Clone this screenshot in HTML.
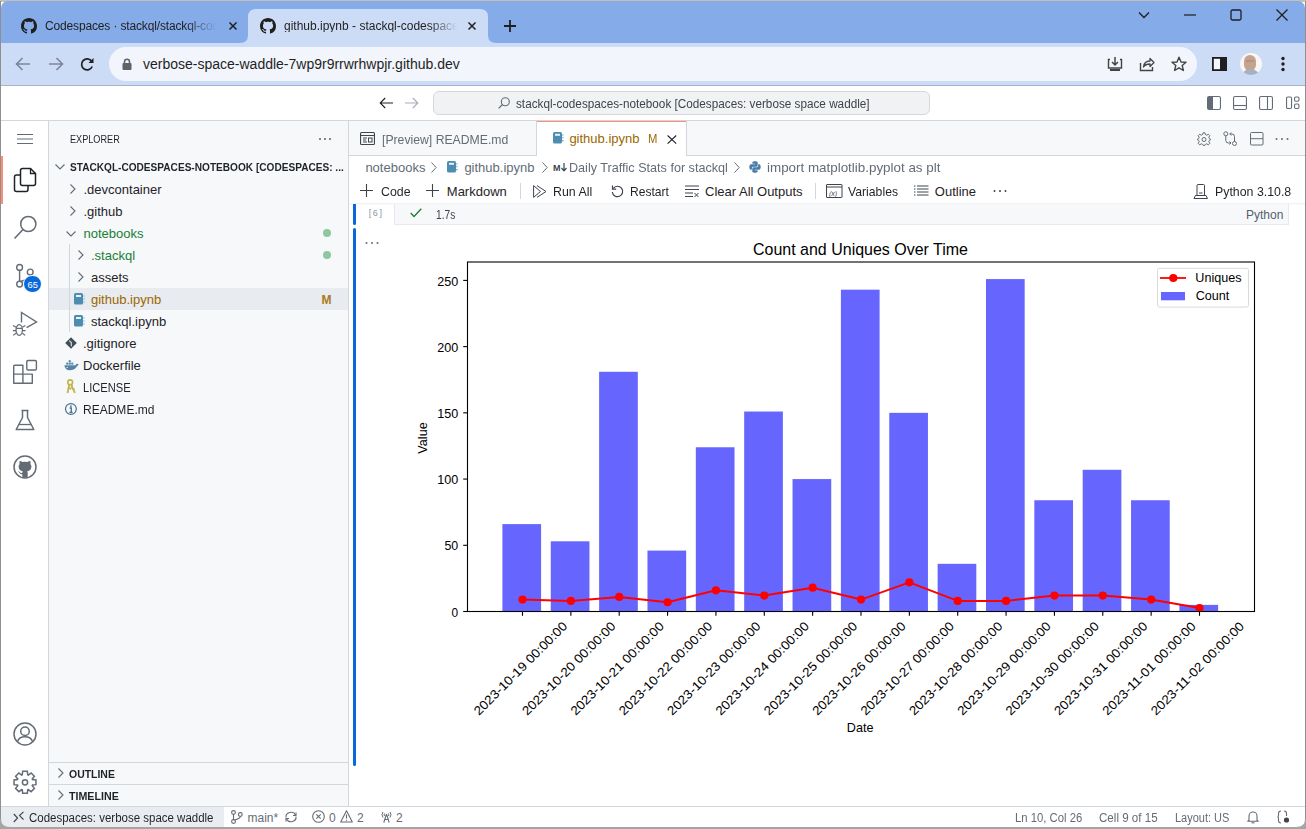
<!DOCTYPE html>
<html><head><meta charset="utf-8">
<style>
*{margin:0;padding:0;box-sizing:border-box}
html,body{width:1306px;height:829px;overflow:hidden;background:#fff;font-family:"Liberation Sans",sans-serif;color:#1f2328}
.a{position:absolute}
.t{position:absolute;white-space:nowrap;line-height:1}
svg{position:absolute;overflow:visible}
text{font-family:"Liberation Sans",sans-serif}
</style></head><body>
<svg width="0" height="0" style="position:absolute"><defs><path id="gh" d="M8 0C3.58 0 0 3.58 0 8c0 3.54 2.29 6.53 5.47 7.59.4.07.55-.17.55-.38 0-.19-.01-.82-.01-1.49-2.01.37-2.53-.49-2.69-.94-.09-.23-.48-.94-.82-1.13-.28-.15-.68-.52-.01-.53.63-.01 1.08.58 1.23.82.72 1.21 1.87.87 2.33.66.07-.52.28-.87.51-1.07-1.78-.2-3.64-.89-3.64-3.95 0-.87.31-1.59.82-2.15-.08-.2-.36-1.02.08-2.12 0 0 .67-.21 2.2.82.64-.18 1.32-.27 2-.27.68 0 1.36.09 2 .27 1.53-1.04 2.2-.82 2.2-.82.44 1.1.16 1.92.08 2.12.51.56.82 1.27.82 2.15 0 3.07-1.87 3.75-3.65 3.95.29.25.54.73.54 1.48 0 1.07-.01 1.93-.01 2.2 0 .21.15.46.55.38A8.013 8.013 0 0016 8c0-4.42-3.58-8-8-8z"/></defs></svg>
<!-- desktop strip -->
<div class="a" style="left:0;top:0;width:1306px;height:2px;background:#c4c0b8"></div>
<!-- chrome tabstrip -->
<div class="a" style="left:1px;top:1px;width:1304px;height:42px;background:#85abe8;border-radius:7px 7px 0 0"></div>
<!-- chrome toolbar -->
<div class="a" style="left:1px;top:43px;width:1304px;height:42px;background:#ccdcf6"></div>
<div class="a" style="left:1px;top:85px;width:1304px;height:1px;background:#a6b4c9"></div>
<!-- active tab shape -->
<svg style="left:0;top:0" width="1306" height="44"><path d="M240,43 Q248,43 248,35 L248,17 Q248,9 256,9 L480,9 Q488,9 488,17 L488,35 Q488,43 496,43 Z" fill="#ccdcf6"/></svg>
<!-- tab 1 -->
<svg style="left:21px;top:18px" width="16" height="16" viewBox="0 0 16 16"><use href="#gh" fill="#1f1f1f"/></svg>
<div class="t" style="left:45px;top:20px;font-size:12px;color:#1f1f1f;width:171px;overflow:hidden;-webkit-mask-image:linear-gradient(to right,#000 82%,transparent 100%);letter-spacing:-0.15px">Codespaces · stackql/stackql-codespaces</div>
<svg style="left:229px;top:22px" width="8" height="8"><path d="M0.5,0.5 L7.5,7.5 M7.5,0.5 L0.5,7.5" stroke="#1f1f1f" stroke-width="1.5"/></svg>
<!-- tab 2 -->
<svg style="left:260px;top:18px" width="16" height="16" viewBox="0 0 16 16"><use href="#gh" fill="#1f1f1f"/></svg>
<div class="t" style="left:284px;top:20px;font-size:12px;color:#1f1f1f;width:173px;overflow:hidden;-webkit-mask-image:linear-gradient(to right,#000 84%,transparent 100%)">github.ipynb - stackql-codespaces-notebook</div>
<svg style="left:468px;top:22px" width="8" height="8"><path d="M0.5,0.5 L7.5,7.5 M7.5,0.5 L0.5,7.5" stroke="#1f1f1f" stroke-width="1.5"/></svg>
<!-- new tab + -->
<svg style="left:503px;top:19px" width="14" height="14"><path d="M7,1 L7,13 M1,7 L13,7" stroke="#1f1f1f" stroke-width="1.8"/></svg>
<!-- window controls -->
<svg style="left:1138px;top:11px" width="12" height="8"><path d="M1,1.5 L6,6.5 L11,1.5" stroke="#1f1f1f" stroke-width="1.3" fill="none"/></svg>
<svg style="left:1184px;top:14px" width="12" height="2"><path d="M0,1 L12,1" stroke="#1f1f1f" stroke-width="1.2"/></svg>
<svg style="left:1230px;top:9px" width="12" height="12"><rect x="1" y="1" width="10" height="10" rx="1.5" stroke="#1f1f1f" stroke-width="1.3" fill="none"/></svg>
<svg style="left:1276px;top:9px" width="12" height="12"><path d="M0.5,0.5 L11.5,11.5 M11.5,0.5 L0.5,11.5" stroke="#1f1f1f" stroke-width="1.3"/></svg>
<!-- toolbar nav -->
<svg style="left:15px;top:57px" width="16" height="14"><path d="M15,7 L1.5,7 M7.5,1 L1.5,7 L7.5,13" stroke="#7c8594" stroke-width="1.6" fill="none"/></svg>
<svg style="left:48px;top:57px" width="16" height="14"><path d="M1,7 L14.5,7 M8.5,1 L14.5,7 L8.5,13" stroke="#7c8594" stroke-width="1.6" fill="none"/></svg>
<svg style="left:80px;top:57px" width="15" height="15"><path d="M12.2,9.5 A5.5,5.5 0 1 1 11.5,4" stroke="#1f1f1f" stroke-width="1.7" fill="none"/><path d="M13.5,1 L13.5,6 L8.5,6 Z" fill="#1f1f1f"/></svg>
<!-- omnibox -->
<div class="a" style="left:109px;top:47px;width:1088px;height:34px;background:#f2f6fc;border-radius:17px"></div>
<svg style="left:122px;top:58px" width="10" height="12"><rect x="0.5" y="5" width="9" height="7" rx="1" fill="#5f6368"/><path d="M2.5,5.5 V3.8 A2.5,2.5 0 0 1 7.5,3.8 V5.5" stroke="#5f6368" stroke-width="1.5" fill="none"/></svg>
<div class="t" style="left:143px;top:57px;font-size:14px;color:#1f1f1f">verbose-space-waddle-7wp9r9rrwrhwpjr.github.dev</div>
<!-- omnibox right icons -->
<svg style="left:1107px;top:56px" width="16" height="16"><path d="M3,3.5 H1.5 V12 H14.5 V3.5 H13" stroke="#444" stroke-width="1.4" fill="none"/><path d="M8,1 V9 M5,6 L8,9 L11,6" stroke="#444" stroke-width="1.5" fill="none"/><rect x="3" y="13" width="10" height="2" fill="#444"/></svg>
<svg style="left:1139px;top:56px" width="16" height="16"><path d="M1.5,7 V14.5 H13.5 V11" stroke="#444" stroke-width="1.4" fill="none"/><path d="M4.5,11 C5,6.5 8,5 11,5 V2.5 L15,6.5 L11,10.5 V8 C8.5,8 6,8.5 4.5,11 Z" stroke="#444" stroke-width="1.3" fill="none" stroke-linejoin="round"/></svg>
<svg style="left:1171px;top:56px" width="16" height="16"><path d="M8,1.2 L10,6 L15,6.3 L11.2,9.5 L12.4,14.5 L8,11.8 L3.6,14.5 L4.8,9.5 L1,6.3 L6,6 Z" stroke="#444" stroke-width="1.4" fill="none" stroke-linejoin="round"/></svg>
<!-- sidebar icon -->
<svg style="left:1212px;top:57px" width="15" height="14"><rect x="0.9" y="0.9" width="13.2" height="12.2" stroke="#1f1f1f" stroke-width="1.8" fill="#f4f6f9"/><rect x="8" y="1" width="6" height="12" fill="#1f1f1f"/></svg>
<!-- avatar -->
<div class="a" style="left:1240px;top:53px;width:22px;height:22px;border-radius:11px;background:#f8f7f5;overflow:hidden">
  <div class="a" style="left:4px;top:1.5px;width:12px;height:16px;border-radius:6px 6px 6px 6px;background:#c6a38c"></div>
  <div class="a" style="left:6px;top:7px;width:8px;height:2px;background:#a88a78;opacity:.6"></div>
  <div class="a" style="left:1px;top:15.5px;width:19px;height:10px;border-radius:9px 9px 0 0;background:#a4b0c4"></div>
</div>
<!-- menu dots -->
<svg style="left:1280px;top:56px" width="6" height="16"><circle cx="3" cy="2.5" r="1.7" fill="#1f1f1f"/><circle cx="3" cy="8" r="1.7" fill="#1f1f1f"/><circle cx="3" cy="13.5" r="1.7" fill="#1f1f1f"/></svg>
<!-- left/right window borders -->
<div class="a" style="left:0;top:1px;width:1px;height:828px;background:#8f8f8f"></div>
<div class="a" style="left:1305px;top:1px;width:1px;height:828px;background:#8f8f8f"></div>
<!-- VS Code title bar -->
<div class="a" style="left:1px;top:86px;width:1304px;height:34px;background:#fff"></div>
<div class="a" style="left:1px;top:120px;width:1304px;height:1px;background:#d0d7de"></div>
<svg style="left:379px;top:97px" width="14" height="12"><path d="M14,6 L1.2,6 M6.2,1 L1.2,6 L6.2,11" stroke="#1f2328" stroke-width="1.1" fill="none"/></svg>
<svg style="left:405px;top:97px" width="14" height="12"><path d="M0,6 L12.8,6 M7.8,1 L12.8,6 L7.8,11" stroke="#a8aeb5" stroke-width="1.1" fill="none"/></svg>
<div class="a" style="left:433px;top:91px;width:497px;height:24px;background:#f1f2f3;border:1px solid #d4d7db;border-radius:6px"></div>
<svg style="left:498px;top:97px" width="12" height="12"><circle cx="7.3" cy="4.7" r="4" stroke="#636c76" stroke-width="1.1" fill="none"/><path d="M4.5,7.5 L0.6,11.4" stroke="#636c76" stroke-width="1.2"/></svg>
<div class="t" style="left:516px;top:97.5px;font-size:12px;color:#3d444d;transform:scaleX(0.978);transform-origin:left">stackql-codespaces-notebook [Codespaces: verbose space waddle]</div>
<!-- layout icons -->
<svg style="left:1207px;top:96px" width="14" height="14"><rect x="0.55" y="0.55" width="12.9" height="12.9" rx="1.5" stroke="#636c76" stroke-width="1.1" fill="none"/><path d="M1,1 H6 V13 H1 Z" fill="#636c76"/></svg>
<svg style="left:1233px;top:96px" width="14" height="14"><rect x="0.55" y="0.55" width="12.9" height="12.9" rx="1.5" stroke="#636c76" stroke-width="1.1" fill="none"/><path d="M1,9.5 H13" stroke="#636c76" stroke-width="1.1"/></svg>
<svg style="left:1259px;top:96px" width="14" height="14"><rect x="0.55" y="0.55" width="12.9" height="12.9" rx="1.5" stroke="#636c76" stroke-width="1.1" fill="none"/><path d="M8.5,1 V13" stroke="#636c76" stroke-width="1.1"/></svg>
<svg style="left:1286px;top:96px" width="14" height="14"><rect x="0.55" y="1.05" width="5" height="11.5" rx="1.2" stroke="#636c76" stroke-width="1.1" fill="none"/><rect x="8.55" y="1.05" width="4.4" height="4.2" rx="1.2" stroke="#636c76" stroke-width="1.1" fill="none"/><rect x="8.55" y="8.05" width="4.4" height="4.4" rx="1.2" stroke="#636c76" stroke-width="1.1" fill="none"/></svg>

<!-- activity bar -->
<div class="a" style="left:1px;top:121px;width:47px;height:686px;background:#fff"></div>
<div class="a" style="left:48px;top:121px;width:1px;height:686px;background:#d0d7de"></div>
<svg style="left:17px;top:133px" width="16" height="12"><path d="M0,1.5 H16 M0,6 H16 M0,10.5 H16" stroke="#636c76" stroke-width="1.1"/></svg>
<div class="a" style="left:1px;top:156px;width:2px;height:48px;background:#fd8c73"></div>
<!-- explorer icon -->
<svg style="left:13px;top:167px" width="24" height="26"><path d="M7.5,8 H3.5 Q1.5,8 1.5,10 V22.5 Q1.5,24.5 3.5,24.5 H13 Q15,24.5 15,22.5 V18.5" stroke="#1f2328" stroke-width="1.5" fill="none"/><path d="M9.5,1.5 H17.5 L22.5,6.5 V16.5 Q22.5,18.5 20.5,18.5 H9.5 Q7.5,18.5 7.5,16.5 V3.5 Q7.5,1.5 9.5,1.5 Z" stroke="#1f2328" stroke-width="1.5" fill="none" stroke-linejoin="round"/><path d="M17.5,1.5 V6.5 H22.5" stroke="#1f2328" stroke-width="1.3" fill="none"/></svg>
<!-- search -->
<svg style="left:13px;top:215px" width="24" height="26"><circle cx="15.3" cy="9" r="7.6" stroke="#636c76" stroke-width="1.5" fill="none"/><path d="M10,14.5 L1.5,23.5" stroke="#636c76" stroke-width="1.6"/></svg>
<!-- scm -->
<svg style="left:13px;top:262px" width="26" height="26"><circle cx="6.6" cy="5.4" r="2.9" stroke="#636c76" stroke-width="1.4" fill="none"/><circle cx="17.2" cy="10" r="2.9" stroke="#636c76" stroke-width="1.4" fill="none"/><circle cx="6.6" cy="22.1" r="2.9" stroke="#636c76" stroke-width="1.4" fill="none"/><path d="M6.6,8.3 V19.2 M17.2,12.9 Q17,17.5 7.5,19.5" stroke="#636c76" stroke-width="1.4" fill="none"/></svg>
<div class="a" style="left:22.5px;top:275.3px;width:19px;height:18px;border-radius:9.5px;background:#0969da;border:1px solid #fff"></div>
<div class="t" style="left:27.6px;top:280.5px;font-size:9.3px;color:#fff">65</div>
<!-- run & debug -->
<svg style="left:12px;top:311px" width="26" height="26"><path d="M9.5,11.5 V1.5 L24.5,11 L14.6,16.6" stroke="#636c76" stroke-width="1.4" fill="none" stroke-linejoin="miter"/><ellipse cx="7.2" cy="19" rx="3.2" ry="5.3" stroke="#636c76" stroke-width="1.3" fill="none"/><path d="M4.2,17.3 H10.2 M1,14.6 L4,16.3 M13.4,14.6 L10.4,16.3 M0.8,19.6 H4 M10.4,19.6 H13.6 M1.2,24.4 L4,22.2 M13.2,24.4 L10.4,22.2" stroke="#636c76" stroke-width="1.2"/></svg>
<!-- extensions -->
<svg style="left:13px;top:359px" width="25" height="25"><path d="M0.7,7.2 Q0.7,6.2 1.7,6.2 H9.9 V15.1 H19.3 V24.2 H0.7 Z M0.7,15.1 H9.9 V24.2" stroke="#636c76" stroke-width="1.4" fill="none" stroke-linejoin="round"/><rect x="13.8" y="1.5" width="9.6" height="9.5" rx="1.2" stroke="#636c76" stroke-width="1.4" fill="none"/></svg>
<!-- testing -->
<svg style="left:15px;top:409px" width="20" height="22"><path d="M6.5,1.5 H13.5 M7.5,1.5 V8.5 L1.2,20.5 H18.8 L12.5,8.5 V1.5" stroke="#636c76" stroke-width="1.5" fill="none" stroke-linejoin="round"/><path d="M4,15.5 H16" stroke="#636c76" stroke-width="1.3"/></svg>
<!-- github -->
<svg style="left:13px;top:455px" width="24" height="24"><circle cx="12" cy="12" r="11" stroke="#636c76" stroke-width="1.5" fill="none"/><path d="M9.3,22.8 V19.3 Q6.8,19.5 5.8,17 Q5.5,16.3 4.8,16 Q5.8,16 6.5,17 Q7.5,18.3 9.3,18 V17.5 Q9.3,16.8 9.8,16.2 Q5.6,15.6 5.6,11.4 Q5.6,10 6.6,8.9 Q6.2,7.7 6.7,6.1 Q8.2,6.1 9.6,7.1 Q12,6.4 14.4,7.1 Q15.8,6.1 17.3,6.1 Q17.8,7.7 17.4,8.9 Q18.4,10 18.4,11.4 Q18.4,15.6 14.2,16.2 Q14.7,16.8 14.7,17.8 V22.8 Z" fill="#636c76"/></svg>
<!-- accounts -->
<svg style="left:13px;top:722px" width="24" height="24"><circle cx="12" cy="12" r="11" stroke="#636c76" stroke-width="1.5" fill="none"/><circle cx="12" cy="9.3" r="4.3" stroke="#636c76" stroke-width="1.5" fill="none"/><path d="M4.5,19.5 Q6,14.7 12,14.7 Q18,14.7 19.5,19.5" stroke="#636c76" stroke-width="1.5" fill="none"/></svg>
<!-- settings gear -->
<svg style="left:13px;top:770px" width="24" height="24" viewBox="0 0 24 24"><path d="M9.26,4.78 L9.67,1.34 L14.33,1.34 L14.74,4.78 L15.38,5.05 L18.10,2.91 L21.39,6.20 L19.25,8.92 L19.52,9.56 L22.96,9.97 L22.96,14.63 L19.52,15.04 L19.25,15.68 L21.39,18.40 L18.10,21.69 L15.38,19.55 L14.74,19.82 L14.33,23.26 L9.67,23.26 L9.26,19.82 L8.62,19.55 L5.90,21.69 L2.61,18.40 L4.75,15.68 L4.48,15.04 L1.04,14.63 L1.04,9.97 L4.48,9.56 L4.75,8.92 L2.61,6.20 L5.90,2.91 L8.62,5.05 Z" stroke="#636c76" stroke-width="1.5" fill="none" stroke-linejoin="miter"/><circle cx="12" cy="12.3" r="2.6" stroke="#636c76" stroke-width="1.5" fill="none"/></svg>

<!-- sidebar -->
<div class="a" style="left:49px;top:121px;width:299px;height:686px;background:#f6f8fa"></div>
<div class="a" style="left:348px;top:121px;width:1px;height:686px;background:#d0d7de"></div>
<div class="t" style="left:69.5px;top:134px;font-size:11px;color:#1f2328;transform:scaleX(0.83);transform-origin:left">EXPLORER</div>
<svg style="left:318px;top:137px" width="14" height="4"><circle cx="2" cy="2" r="1.1" fill="#636c76"/><circle cx="7" cy="2" r="1.1" fill="#636c76"/><circle cx="12" cy="2" r="1.1" fill="#636c76"/></svg>
<svg style="left:55px;top:164px" width="10" height="6"><path d="M0.5,0.5 L5,5 L9.5,0.5" stroke="#636c76" stroke-width="1.1" fill="none"/></svg>
<div class="t" style="left:69.5px;top:162px;font-size:11px;font-weight:bold;color:#1f2328;transform:scaleX(0.918);transform-origin:left">STACKQL-CODESPACES-NOTEBOOK [CODESPACES: ...</div>
<!-- rows -->
<svg style="left:70px;top:184px" width="6" height="10"><path d="M0.5,0.5 L5,5 L0.5,9.5" stroke="#636c76" stroke-width="1.1" fill="none"/></svg>
<div class="t" style="left:83.5px;top:183px;font-size:13px">.devcontainer</div>
<svg style="left:70px;top:206px" width="6" height="10"><path d="M0.5,0.5 L5,5 L0.5,9.5" stroke="#636c76" stroke-width="1.1" fill="none"/></svg>
<div class="t" style="left:83.5px;top:205px;font-size:13px">.github</div>
<svg style="left:66px;top:231px" width="10" height="6"><path d="M0.5,0.5 L5,5 L9.5,0.5" stroke="#636c76" stroke-width="1.1" fill="none"/></svg>
<div class="t" style="left:83.5px;top:227px;font-size:13px;color:#1a7f37">notebooks</div>
<div class="a" style="left:323px;top:229px;width:8px;height:8px;border-radius:4px;background:#8fc7a0"></div>
<div class="a" style="left:69px;top:244px;width:1px;height:88px;background:#d0d7de"></div>
<svg style="left:78px;top:250px" width="6" height="10"><path d="M0.5,0.5 L5,5 L0.5,9.5" stroke="#636c76" stroke-width="1.1" fill="none"/></svg>
<div class="t" style="left:91px;top:249px;font-size:13px;color:#1a7f37">.stackql</div>
<div class="a" style="left:323px;top:251px;width:8px;height:8px;border-radius:4px;background:#8fc7a0"></div>
<svg style="left:78px;top:272px" width="6" height="10"><path d="M0.5,0.5 L5,5 L0.5,9.5" stroke="#636c76" stroke-width="1.1" fill="none"/></svg>
<div class="t" style="left:91px;top:271px;font-size:13px">assets</div>
<div class="a" style="left:49px;top:288px;width:299px;height:22px;background:#e8ebef"></div>
<div class="a" style="left:69px;top:288px;width:1px;height:22px;background:#d0d7de"></div>
<svg style="left:74px;top:293.3px" width="11" height="12"><rect x="0" y="0" width="9" height="11.5" rx="1.5" fill="#4d8eb0"/><rect x="2" y="2" width="5" height="2" fill="#e8f1f6"/><path d="M9.5,3 H10.5 M9.5,6 H10.5 M9.5,9 H10.5" stroke="#4d8eb0" stroke-width="1.2"/></svg>
<div class="t" style="left:91px;top:293px;font-size:13px;color:#9a6700">github.ipynb</div>
<div class="t" style="left:321.5px;top:294px;font-size:12px;font-weight:bold;color:#a97b1e">M</div>
<svg style="left:74px;top:315.3px" width="11" height="12"><rect x="0" y="0" width="9" height="11.5" rx="1.5" fill="#4d8eb0"/><rect x="2" y="2" width="5" height="2" fill="#e8f1f6"/><path d="M9.5,3 H10.5 M9.5,6 H10.5 M9.5,9 H10.5" stroke="#4d8eb0" stroke-width="1.2"/></svg>
<div class="t" style="left:91px;top:315px;font-size:13px">stackql.ipynb</div>
<!-- gitignore -->
<svg style="left:65px;top:337px" width="12" height="12"><path d="M6,0.2 L11.8,6 L6,11.8 L0.2,6 Z" fill="#3f4f58"/><path d="M4.3,3.6 L6.3,5.6 V9.2" stroke="#dfe6ea" stroke-width="1.1" fill="none"/></svg>
<div class="t" style="left:83px;top:337px;font-size:13px">.gitignore</div>
<!-- docker -->
<svg style="left:64px;top:360px" width="15" height="11"><path d="M0.3,5.2 H11.5 Q12.3,3.6 13.8,3.9 Q14.6,4.2 14.7,4.9 Q13.8,5.2 13,6.2 Q11,10.2 5.5,10.2 Q1.2,10.2 0.3,5.2 Z" fill="#5486a8"/><rect x="2.2" y="2.6" width="2.1" height="2" fill="#5486a8"/><rect x="4.7" y="2.6" width="2.1" height="2" fill="#5486a8"/><rect x="7.2" y="2.6" width="2.1" height="2" fill="#5486a8"/><rect x="4.7" y="0.2" width="2.1" height="2" fill="#5486a8"/><circle cx="3.2" cy="7.4" r="0.6" fill="#f6f8fa"/></svg>
<div class="t" style="left:83px;top:359px;font-size:13px">Dockerfile</div>
<!-- license -->
<svg style="left:66px;top:379px" width="10" height="15"><circle cx="4.2" cy="3.3" r="2.4" stroke="#c1b54a" stroke-width="1.6" fill="none"/><path d="M3.2,5.5 L1.6,14 M5.6,5.5 L6.4,9 M3.5,9.5 H5.3 M5.5,7 L9,13.8 M7,10.5 L8.6,9.8" stroke="#c1b54a" stroke-width="1.8" fill="none"/></svg>
<div class="t" style="left:83px;top:381px;font-size:13px;transform:scaleX(0.855);transform-origin:left">LICENSE</div>
<!-- readme info -->
<svg style="left:65px;top:403px" width="12" height="12"><circle cx="5.9" cy="6" r="5.4" stroke="#4b6e8e" stroke-width="1.2" fill="none"/><path d="M4.6,5 H6.3 V9.3 M4.4,9.3 H7.6" stroke="#4b6e8e" stroke-width="1.3" fill="none"/><circle cx="5.9" cy="3.1" r="0.9" fill="#4b6e8e"/></svg>
<div class="t" style="left:83px;top:403px;font-size:13px;transform:scaleX(0.924);transform-origin:left">README.md</div>
<!-- outline / timeline -->
<div class="a" style="left:49px;top:762px;width:299px;height:1px;background:#d0d7de"></div>
<svg style="left:58px;top:768px" width="6" height="10"><path d="M0.5,0.5 L5,5 L0.5,9.5" stroke="#636c76" stroke-width="1.1" fill="none"/></svg>
<div class="t" style="left:69px;top:768.5px;font-size:11px;font-weight:bold;transform:scaleX(0.95);transform-origin:left">OUTLINE</div>
<div class="a" style="left:49px;top:784px;width:299px;height:1px;background:#d0d7de"></div>
<svg style="left:58px;top:790px" width="6" height="10"><path d="M0.5,0.5 L5,5 L0.5,9.5" stroke="#636c76" stroke-width="1.1" fill="none"/></svg>
<div class="t" style="left:69px;top:790.5px;font-size:11px;font-weight:bold;transform:scaleX(0.97);transform-origin:left">TIMELINE</div>

<!-- status bar -->
<div class="a" style="left:1px;top:806px;width:1304px;height:1px;background:#d0d7de"></div>
<div class="a" style="left:1px;top:807px;width:1304px;height:20px;background:#fff"></div>
<div class="a" style="left:1px;top:807px;width:223px;height:20px;background:#e9ecf0"></div>
<svg style="left:13px;top:811px" width="11" height="12"><path d="M0.8,11 L4.6,7 L0.8,3 M10.5,0.8 L6.5,4.6 L10.5,8.5" stroke="#3d444d" stroke-width="1.1" fill="none"/></svg>
<div class="t" style="left:28.8px;top:811.8px;font-size:12px;color:#1f2328;transform:scaleX(0.957);transform-origin:left">Codespaces: verbose space waddle</div>
<svg style="left:231px;top:810px" width="12" height="14"><circle cx="2.5" cy="2.5" r="1.9" stroke="#636c76" stroke-width="1.1" fill="none"/><circle cx="9.3" cy="4.5" r="1.9" stroke="#636c76" stroke-width="1.1" fill="none"/><circle cx="2.5" cy="11.5" r="1.9" stroke="#636c76" stroke-width="1.1" fill="none"/><path d="M2.5,4.4 V9.6 M9.3,6.4 Q9.3,8.5 3.5,10" stroke="#636c76" stroke-width="1.1" fill="none"/></svg>
<div class="t" style="left:247.5px;top:811.8px;font-size:12px;color:#636c76">main*</div>
<svg style="left:284px;top:811px" width="14" height="12"><path d="M2,6.5 A5,4.7 0 0 1 11.5,4 M12,5.5 A5,4.7 0 0 1 2.5,8" stroke="#636c76" stroke-width="1.1" fill="none"/><path d="M12,1.5 V4.5 H9 M2,10.5 V7.5 H5" stroke="#636c76" stroke-width="1.1" fill="none"/></svg>
<svg style="left:312px;top:810px" width="13" height="13"><circle cx="6.5" cy="6.5" r="5.8" stroke="#636c76" stroke-width="1.1" fill="none"/><path d="M4.3,4.3 L8.7,8.7 M8.7,4.3 L4.3,8.7" stroke="#636c76" stroke-width="1.1"/></svg>
<div class="t" style="left:329px;top:811.8px;font-size:12px;color:#636c76">0</div>
<svg style="left:339.5px;top:810px" width="13" height="13"><path d="M6.5,0.8 L12.3,12 H0.7 Z" stroke="#636c76" stroke-width="1.1" fill="none" stroke-linejoin="round"/><path d="M6.5,4.5 V8.5 M6.5,9.8 V10.8" stroke="#636c76" stroke-width="1.1"/></svg>
<div class="t" style="left:357px;top:811.8px;font-size:12px;color:#636c76">2</div>
<svg style="left:380px;top:810px" width="13" height="13"><path d="M3,2 Q1,4.5 3,7.5 M10,2 Q12,4.5 10,7.5 M4.5,3.5 Q3.8,4.7 4.5,6 M8.5,3.5 Q9.2,4.7 8.5,6" stroke="#636c76" stroke-width="1" fill="none"/><path d="M6.5,4 L3.8,12.5 M6.5,4 L9.2,12.5 M4.8,9.5 H8.2" stroke="#636c76" stroke-width="1.1" fill="none"/></svg>
<div class="t" style="left:396px;top:811.8px;font-size:12px;color:#636c76">2</div>
<div class="t" style="left:1015px;top:811.8px;font-size:12px;color:#636c76;transform:scaleX(0.943);transform-origin:left">Ln 10, Col 26</div>
<div class="t" style="left:1099px;top:811.8px;font-size:12px;color:#636c76;transform:scaleX(0.965);transform-origin:left">Cell 9 of 15</div>
<div class="t" style="left:1174.6px;top:811.8px;font-size:12px;color:#636c76;transform:scaleX(0.916);transform-origin:left">Layout: US</div>
<svg style="left:1247px;top:810px" width="12" height="14"><path d="M2,10 V6 A4,4 0 0 1 10,6 V10 L11.3,11.3 H0.7 Z" stroke="#636c76" stroke-width="1.1" fill="none" stroke-linejoin="round"/><path d="M4.5,12.8 H7.5" stroke="#636c76" stroke-width="1.1"/></svg>
<svg style="left:1277px;top:810px" width="13" height="14"><path d="M4,1 Q1.5,1 1.5,3.5 V5.5 Q1.5,7 0.5,7 Q1.5,7 1.5,8.5 V10.5 Q1.5,13 4,13" stroke="#636c76" stroke-width="1.1" fill="none"/><path d="M7,1 Q9.5,1 9.5,3.5 V6" stroke="#636c76" stroke-width="1.1" fill="none"/><circle cx="9.5" cy="10" r="2.6" fill="#3d444d"/></svg>
<!-- window bottom -->
<div class="a" style="left:0;top:827px;width:1306px;height:2px;background:#a5a5a5"></div>
<svg style="left:0;top:819px" width="1306" height="10"><path d="M0,0 V10 H10 V8 Q1,8 1,0 Z M1306,0 V10 H1296 V8 Q1305,8 1305,0 Z" fill="#a5a5a5"/></svg>
<!-- editor bg -->
<div class="a" style="left:349px;top:156px;width:956px;height:649px;background:#fff"></div>
<!-- tabs bar -->
<div class="a" style="left:349px;top:121px;width:956px;height:35px;background:#f6f8fa"></div>
<div class="a" style="left:349px;top:155px;width:956px;height:1px;background:#d0d7de"></div>
<div class="a" style="left:536px;top:121px;width:1px;height:35px;background:#d0d7de"></div>
<div class="a" style="left:537px;top:121px;width:149px;height:35px;background:#fff"></div>
<div class="a" style="left:537px;top:121px;width:149px;height:1px;background:#fd8c73"></div>
<div class="a" style="left:686px;top:121px;width:1px;height:35px;background:#d0d7de"></div>
<!-- preview icon -->
<svg style="left:360px;top:132px" width="15" height="13"><rect x="0.55" y="0.55" width="13.9" height="11.9" rx="1" stroke="#3d444d" stroke-width="1.1" fill="none"/><path d="M1,3.5 H14 M3,6 H7 M3,8 H6 M3,10 H7" stroke="#3d444d" stroke-width="1"/><rect x="8.5" y="6" width="3.5" height="4" stroke="#3d444d" stroke-width="1" fill="none"/></svg>
<div class="t" style="left:382px;top:132.7px;font-size:13px;color:#636c76;transform:scaleX(0.94);transform-origin:left">[Preview] README.md</div>
<svg style="left:552.5px;top:132px" width="11" height="12"><rect x="0" y="0" width="9" height="11.5" rx="1.5" fill="#4d8eb0"/><rect x="2" y="1.8" width="5" height="2" fill="#e8f1f6"/><path d="M9.3,3 H10.5 M9.3,5.8 H10.5 M9.3,8.6 H10.5" stroke="#4d8eb0" stroke-width="1.1"/></svg>
<div class="t" style="left:569.4px;top:132.3px;font-size:13px;color:#9a6700">github.ipynb</div>
<div class="t" style="left:647.5px;top:132.8px;font-size:12.5px;color:#9a6700;transform:scaleX(0.9);transform-origin:left">M</div>
<svg style="left:667px;top:134.5px" width="10" height="9"><path d="M0.6,0.5 L9.2,8.7 M9.2,0.5 L0.6,8.7" stroke="#1f2328" stroke-width="1.1"/></svg>
<!-- editor actions -->
<svg style="left:1197px;top:132px" width="14" height="14"><path d="M6,0.8 H8 L8.4,2.6 L9.7,3.2 L11.3,2.2 L12.8,3.7 L11.8,5.3 L12.3,6.5 L13.3,6.9 V8.1 L12.3,8.5 L11.8,9.7 L12.8,11.3 L11.3,12.8 L9.7,11.8 L8.4,12.4 L8,13.3 H6 L5.6,12.4 L4.3,11.8 L2.7,12.8 L1.2,11.3 L2.2,9.7 L1.7,8.5 L0.7,8.1 V6.9 L1.7,6.5 L2.2,5.3 L1.2,3.7 L2.7,2.2 L4.3,3.2 L5.6,2.6 Z" stroke="#636c76" stroke-width="1" fill="none" stroke-linejoin="round"/><circle cx="7" cy="7.5" r="2" stroke="#636c76" stroke-width="1" fill="none"/></svg>
<svg style="left:1223px;top:131px" width="15" height="16"><circle cx="2.8" cy="2.8" r="2" stroke="#636c76" stroke-width="1" fill="none"/><circle cx="11.5" cy="12.5" r="2" stroke="#636c76" stroke-width="1" fill="none"/><path d="M2.8,4.8 V9.5 Q2.8,12 5.5,12 H8 M6.5,10.5 L8,12 L6.5,13.5 M11.5,10.5 V5.5 Q11.5,3 9,3 H7 M8.2,1.5 L6.7,3 L8.2,4.5" stroke="#636c76" stroke-width="1" fill="none"/></svg>
<svg style="left:1250px;top:132px" width="14" height="14"><rect x="0.5" y="0.5" width="12.5" height="12.5" rx="1" stroke="#636c76" stroke-width="1" fill="none"/><path d="M0.5,6.7 H13" stroke="#636c76" stroke-width="1"/></svg>
<svg style="left:1275px;top:137px" width="14" height="4"><circle cx="1.5" cy="2" r="1" fill="#636c76"/><circle cx="7" cy="2" r="1" fill="#636c76"/><circle cx="12.5" cy="2" r="1" fill="#636c76"/></svg>

<!-- breadcrumbs -->
<div class="t" style="left:365.4px;top:161.2px;font-size:13px;color:#636c76">notebooks</div>
<svg style="left:431px;top:162px" width="6" height="11"><path d="M0.5,0.5 L5.2,5.5 L0.5,10.5" stroke="#636c76" stroke-width="1" fill="none"/></svg>
<svg style="left:447px;top:161px" width="11" height="12"><rect x="0" y="0" width="9" height="11.5" rx="1.5" fill="#4d8eb0"/><rect x="2" y="1.8" width="5" height="2" fill="#e8f1f6"/><path d="M9.3,3 H10.5 M9.3,5.8 H10.5 M9.3,8.6 H10.5" stroke="#4d8eb0" stroke-width="1.1"/></svg>
<div class="t" style="left:464.4px;top:161.2px;font-size:13px;color:#636c76">github.ipynb</div>
<svg style="left:542px;top:162px" width="6" height="11"><path d="M0.5,0.5 L5.2,5.5 L0.5,10.5" stroke="#636c76" stroke-width="1" fill="none"/></svg>
<div class="t" style="left:553px;top:163.5px;font-size:9px;font-weight:bold;color:#3d444d;letter-spacing:-0.3px">M</div>
<svg style="left:561px;top:163px" width="6" height="9"><path d="M3,0 V7.5 M0.5,5 L3,7.8 L5.5,5" stroke="#3d444d" stroke-width="1.2" fill="none"/></svg>
<div class="t" style="left:569px;top:161.2px;font-size:13px;color:#636c76;transform:scaleX(0.97);transform-origin:left">Daily Traffic Stats for stackql</div>
<svg style="left:734px;top:162px" width="6" height="11"><path d="M0.5,0.5 L5.2,5.5 L0.5,10.5" stroke="#636c76" stroke-width="1" fill="none"/></svg>
<svg style="left:749px;top:161px" width="12" height="12" viewBox="0 0 12 12"><path d="M6,0.3 C3.2,0.3 3.4,1.5 3.4,1.5 V2.8 H6.1 V3.3 H2.2 C2.2,3.3 0.3,3.1 0.3,6 C0.3,8.8 1.9,8.7 1.9,8.7 H2.9 V7.3 C2.9,7.3 2.8,5.7 4.5,5.7 H7.2 C7.2,5.7 8.7,5.7 8.7,4.2 V1.8 C8.7,1.8 9,0.3 6,0.3 Z" fill="#4a7ea8"/><path d="M6,11.7 C8.8,11.7 8.6,10.5 8.6,10.5 V9.2 H5.9 V8.7 H9.8 C9.8,8.7 11.7,8.9 11.7,6 C11.7,3.2 10.1,3.3 10.1,3.3 H9.1 V4.7 C9.1,4.7 9.2,6.3 7.5,6.3 H4.8 C4.8,6.3 3.3,6.3 3.3,7.8 V10.2 C3.3,10.2 3,11.7 6,11.7 Z" fill="#4a7ea8"/></svg>
<div class="t" style="left:767.2px;top:161.2px;font-size:13px;color:#636c76;transform:scaleX(1.03);transform-origin:left">import matplotlib.pyplot as plt</div>

<!-- notebook toolbar -->
<svg style="left:360px;top:184px" width="13" height="13"><path d="M6.5,0 V13 M0,6.5 H13" stroke="#3d444d" stroke-width="1.1"/></svg>
<div class="t" style="left:380.5px;top:184.6px;font-size:13px;transform:scaleX(0.95);transform-origin:left">Code</div>
<svg style="left:426px;top:184px" width="13" height="13"><path d="M6.5,0 V13 M0,6.5 H13" stroke="#3d444d" stroke-width="1.1"/></svg>
<div class="t" style="left:446.8px;top:184.6px;font-size:13px">Markdown</div>
<div class="a" style="left:520px;top:183px;width:1px;height:16px;background:#d0d7de"></div>
<svg style="left:533px;top:185px" width="14" height="13"><path d="M0.6,0.6 L7.5,6.5 L0.6,12.4 Z M4,0.6 L13,6.5 L4,12.4" stroke="#3d444d" stroke-width="1" fill="none" stroke-linejoin="round"/></svg>
<div class="t" style="left:553.3px;top:184.6px;font-size:13px;transform:scaleX(0.95);transform-origin:left">Run All</div>
<svg style="left:611px;top:185px" width="13" height="13"><path d="M2.2,3.5 A5.2,5.2 0 1 1 1.3,7" stroke="#3d444d" stroke-width="1.2" fill="none"/><path d="M1.5,0.5 V4.2 H5.2" stroke="#3d444d" stroke-width="1.2" fill="none"/></svg>
<div class="t" style="left:630px;top:184.6px;font-size:13px;transform:scaleX(0.93);transform-origin:left">Restart</div>
<svg style="left:685px;top:185px" width="15" height="13"><path d="M0,1 H14 M0,4.5 H14 M0,8 H8 M0,11.5 H8" stroke="#3d444d" stroke-width="1"/><path d="M9.5,8 L13.5,12 M13.5,8 L9.5,12" stroke="#3d444d" stroke-width="1"/></svg>
<div class="t" style="left:705px;top:184.6px;font-size:13px">Clear All Outputs</div>
<div class="a" style="left:815px;top:183px;width:1px;height:16px;background:#d0d7de"></div>
<svg style="left:826px;top:184px" width="17" height="14"><rect x="0.5" y="0.5" width="15.5" height="13" rx="0.5" stroke="#3d444d" stroke-width="1" fill="none"/><path d="M0.5,3 H16" stroke="#3d444d" stroke-width="1"/></svg>
<div class="t" style="left:829px;top:189.5px;font-size:7px;font-style:italic;color:#3d444d">(x)</div>
<div class="t" style="left:848px;top:184.6px;font-size:13px;transform:scaleX(0.94);transform-origin:left">Variables</div>
<svg style="left:914px;top:185px" width="15" height="12"><path d="M0,1 H1.5 M0,4 H1.5 M0,7 H1.5 M0,10 H1.5 M3,1 H14.5 M3,4 H14.5 M3,7 H14.5 M3,10 H14.5" stroke="#3d444d" stroke-width="1"/></svg>
<div class="t" style="left:934.8px;top:184.6px;font-size:13px">Outline</div>
<svg style="left:993px;top:189px" width="14" height="4"><circle cx="1.5" cy="2" r="1" fill="#3d444d"/><circle cx="7" cy="2" r="1" fill="#3d444d"/><circle cx="12.5" cy="2" r="1" fill="#3d444d"/></svg>
<svg style="left:1193px;top:184px" width="16" height="15"><path d="M4,11.5 V1.5 Q4,0.5 5,0.5 H10.5 Q11.5,0.5 11.5,1.5 V11.5 M1,14.5 L2.5,11.5 H13 L14.5,14.5 Z" stroke="#3d444d" stroke-width="1" fill="none" stroke-linejoin="round"/><path d="M6,9 H9.5" stroke="#3d444d" stroke-width="1"/></svg>
<div class="t" style="left:1215px;top:184.6px;font-size:13px;transform:scaleX(0.95);transform-origin:left">Python 3.10.8</div>
<!-- toolbar shadow -->
<div class="a" style="left:349px;top:203px;width:956px;height:2px;background:linear-gradient(#eceef1,#fff)"></div>

<!-- cell status bar -->
<div class="a" style="left:353px;top:204px;width:3px;height:21px;background:#0969da;border-radius:0 0 1.5px 1.5px"></div>
<div class="t" style="left:368.7px;top:208.6px;font-size:9px;color:#8c959f;letter-spacing:1.6px">[6]</div>
<div class="a" style="left:394px;top:204px;width:895px;height:21px;background:#f6f8fa;border:1px solid #e6e9ed;border-top:none"></div>
<svg style="left:410px;top:208px" width="12" height="10"><path d="M0.7,5 L4,8.5 L11.3,0.7" stroke="#1a7f37" stroke-width="1.3" fill="none"/></svg>
<div class="t" style="left:436px;top:209px;font-size:12px;color:#3d444d;transform:scaleX(0.85);transform-origin:left">1.7s</div>
<div class="t" style="left:1246px;top:209px;font-size:12px;color:#57606a">Python</div>

<!-- output focus bar -->
<div class="a" style="left:353px;top:228px;width:3px;height:538px;background:#0969da;border-radius:1.5px"></div>
<svg style="left:365px;top:241px" width="14" height="4"><circle cx="1.5" cy="2" r="1" fill="#636c76"/><circle cx="7" cy="2" r="1" fill="#636c76"/><circle cx="12.5" cy="2" r="1" fill="#636c76"/></svg>
<!-- chart -->
<svg style="left:0;top:0" width="1306" height="829">
<rect x="502.40" y="524.09" width="38.70" height="87.41" fill="#6666ff"/>
<rect x="550.76" y="541.31" width="38.70" height="70.19" fill="#6666ff"/>
<rect x="599.11" y="371.78" width="38.70" height="239.72" fill="#6666ff"/>
<rect x="647.47" y="550.58" width="38.70" height="60.92" fill="#6666ff"/>
<rect x="695.83" y="447.27" width="38.70" height="164.23" fill="#6666ff"/>
<rect x="744.18" y="411.52" width="38.70" height="199.98" fill="#6666ff"/>
<rect x="792.54" y="479.06" width="38.70" height="132.44" fill="#6666ff"/>
<rect x="840.90" y="289.67" width="38.70" height="321.83" fill="#6666ff"/>
<rect x="889.26" y="412.84" width="38.70" height="198.66" fill="#6666ff"/>
<rect x="937.61" y="563.82" width="38.70" height="47.68" fill="#6666ff"/>
<rect x="985.97" y="279.08" width="38.70" height="332.42" fill="#6666ff"/>
<rect x="1034.33" y="500.25" width="38.70" height="111.25" fill="#6666ff"/>
<rect x="1082.68" y="469.79" width="38.70" height="141.71" fill="#6666ff"/>
<rect x="1131.04" y="500.25" width="38.70" height="111.25" fill="#6666ff"/>
<rect x="1179.40" y="604.88" width="38.70" height="6.62" fill="#6666ff"/>
<polyline points="522.50,599.58 570.86,600.90 619.21,596.93 667.57,602.23 715.93,590.31 764.28,595.61 812.64,587.66 861.00,599.58 909.36,582.36 957.71,600.90 1006.07,600.90 1054.43,595.61 1102.78,595.61 1151.14,599.58 1199.50,608.06" fill="none" stroke="#ff0000" stroke-width="2" stroke-linejoin="round"/>
<circle cx="522.50" cy="599.58" r="4.1" fill="#ff0000"/>
<circle cx="570.86" cy="600.90" r="4.1" fill="#ff0000"/>
<circle cx="619.21" cy="596.93" r="4.1" fill="#ff0000"/>
<circle cx="667.57" cy="602.23" r="4.1" fill="#ff0000"/>
<circle cx="715.93" cy="590.31" r="4.1" fill="#ff0000"/>
<circle cx="764.28" cy="595.61" r="4.1" fill="#ff0000"/>
<circle cx="812.64" cy="587.66" r="4.1" fill="#ff0000"/>
<circle cx="861.00" cy="599.58" r="4.1" fill="#ff0000"/>
<circle cx="909.36" cy="582.36" r="4.1" fill="#ff0000"/>
<circle cx="957.71" cy="600.90" r="4.1" fill="#ff0000"/>
<circle cx="1006.07" cy="600.90" r="4.1" fill="#ff0000"/>
<circle cx="1054.43" cy="595.61" r="4.1" fill="#ff0000"/>
<circle cx="1102.78" cy="595.61" r="4.1" fill="#ff0000"/>
<circle cx="1151.14" cy="599.58" r="4.1" fill="#ff0000"/>
<circle cx="1199.50" cy="608.06" r="4.1" fill="#ff0000"/>
<rect x="467.5" y="262.0" width="787.00" height="349.50" fill="none" stroke="#000" stroke-width="1.1"/>
<line x1="463.2" y1="611.50" x2="467.5" y2="611.50" stroke="#000" stroke-width="1.1"/>
<text x="458.2" y="616.70" text-anchor="end" font-size="12.6" textLength="6.6" lengthAdjust="spacingAndGlyphs" fill="#000">0</text>
<line x1="463.2" y1="545.28" x2="467.5" y2="545.28" stroke="#000" stroke-width="1.1"/>
<text x="458.2" y="550.48" text-anchor="end" font-size="12.6" textLength="13.8" lengthAdjust="spacingAndGlyphs" fill="#000">50</text>
<line x1="463.2" y1="479.06" x2="467.5" y2="479.06" stroke="#000" stroke-width="1.1"/>
<text x="458.2" y="484.26" text-anchor="end" font-size="12.6" textLength="21.0" lengthAdjust="spacingAndGlyphs" fill="#000">100</text>
<line x1="463.2" y1="412.84" x2="467.5" y2="412.84" stroke="#000" stroke-width="1.1"/>
<text x="458.2" y="418.04" text-anchor="end" font-size="12.6" textLength="21.0" lengthAdjust="spacingAndGlyphs" fill="#000">150</text>
<line x1="463.2" y1="346.62" x2="467.5" y2="346.62" stroke="#000" stroke-width="1.1"/>
<text x="458.2" y="351.82" text-anchor="end" font-size="12.6" textLength="21.0" lengthAdjust="spacingAndGlyphs" fill="#000">200</text>
<line x1="463.2" y1="280.40" x2="467.5" y2="280.40" stroke="#000" stroke-width="1.1"/>
<text x="458.2" y="285.60" text-anchor="end" font-size="12.6" textLength="21.0" lengthAdjust="spacingAndGlyphs" fill="#000">250</text>
<line x1="522.50" y1="611.5" x2="522.50" y2="615.8" stroke="#000" stroke-width="1.1"/>
<text transform="translate(568.00,627) rotate(-45)" text-anchor="end" font-size="12.6" textLength="126" lengthAdjust="spacingAndGlyphs" fill="#000">2023-10-19 00:00:00</text>
<line x1="570.86" y1="611.5" x2="570.86" y2="615.8" stroke="#000" stroke-width="1.1"/>
<text transform="translate(616.36,627) rotate(-45)" text-anchor="end" font-size="12.6" textLength="126" lengthAdjust="spacingAndGlyphs" fill="#000">2023-10-20 00:00:00</text>
<line x1="619.21" y1="611.5" x2="619.21" y2="615.8" stroke="#000" stroke-width="1.1"/>
<text transform="translate(664.71,627) rotate(-45)" text-anchor="end" font-size="12.6" textLength="126" lengthAdjust="spacingAndGlyphs" fill="#000">2023-10-21 00:00:00</text>
<line x1="667.57" y1="611.5" x2="667.57" y2="615.8" stroke="#000" stroke-width="1.1"/>
<text transform="translate(713.07,627) rotate(-45)" text-anchor="end" font-size="12.6" textLength="126" lengthAdjust="spacingAndGlyphs" fill="#000">2023-10-22 00:00:00</text>
<line x1="715.93" y1="611.5" x2="715.93" y2="615.8" stroke="#000" stroke-width="1.1"/>
<text transform="translate(761.43,627) rotate(-45)" text-anchor="end" font-size="12.6" textLength="126" lengthAdjust="spacingAndGlyphs" fill="#000">2023-10-23 00:00:00</text>
<line x1="764.28" y1="611.5" x2="764.28" y2="615.8" stroke="#000" stroke-width="1.1"/>
<text transform="translate(809.78,627) rotate(-45)" text-anchor="end" font-size="12.6" textLength="126" lengthAdjust="spacingAndGlyphs" fill="#000">2023-10-24 00:00:00</text>
<line x1="812.64" y1="611.5" x2="812.64" y2="615.8" stroke="#000" stroke-width="1.1"/>
<text transform="translate(858.14,627) rotate(-45)" text-anchor="end" font-size="12.6" textLength="126" lengthAdjust="spacingAndGlyphs" fill="#000">2023-10-25 00:00:00</text>
<line x1="861.00" y1="611.5" x2="861.00" y2="615.8" stroke="#000" stroke-width="1.1"/>
<text transform="translate(906.50,627) rotate(-45)" text-anchor="end" font-size="12.6" textLength="126" lengthAdjust="spacingAndGlyphs" fill="#000">2023-10-26 00:00:00</text>
<line x1="909.36" y1="611.5" x2="909.36" y2="615.8" stroke="#000" stroke-width="1.1"/>
<text transform="translate(954.86,627) rotate(-45)" text-anchor="end" font-size="12.6" textLength="126" lengthAdjust="spacingAndGlyphs" fill="#000">2023-10-27 00:00:00</text>
<line x1="957.71" y1="611.5" x2="957.71" y2="615.8" stroke="#000" stroke-width="1.1"/>
<text transform="translate(1003.21,627) rotate(-45)" text-anchor="end" font-size="12.6" textLength="126" lengthAdjust="spacingAndGlyphs" fill="#000">2023-10-28 00:00:00</text>
<line x1="1006.07" y1="611.5" x2="1006.07" y2="615.8" stroke="#000" stroke-width="1.1"/>
<text transform="translate(1051.57,627) rotate(-45)" text-anchor="end" font-size="12.6" textLength="126" lengthAdjust="spacingAndGlyphs" fill="#000">2023-10-29 00:00:00</text>
<line x1="1054.43" y1="611.5" x2="1054.43" y2="615.8" stroke="#000" stroke-width="1.1"/>
<text transform="translate(1099.93,627) rotate(-45)" text-anchor="end" font-size="12.6" textLength="126" lengthAdjust="spacingAndGlyphs" fill="#000">2023-10-30 00:00:00</text>
<line x1="1102.78" y1="611.5" x2="1102.78" y2="615.8" stroke="#000" stroke-width="1.1"/>
<text transform="translate(1148.28,627) rotate(-45)" text-anchor="end" font-size="12.6" textLength="126" lengthAdjust="spacingAndGlyphs" fill="#000">2023-10-31 00:00:00</text>
<line x1="1151.14" y1="611.5" x2="1151.14" y2="615.8" stroke="#000" stroke-width="1.1"/>
<text transform="translate(1196.64,627) rotate(-45)" text-anchor="end" font-size="12.6" textLength="126" lengthAdjust="spacingAndGlyphs" fill="#000">2023-11-01 00:00:00</text>
<line x1="1199.50" y1="611.5" x2="1199.50" y2="615.8" stroke="#000" stroke-width="1.1"/>
<text transform="translate(1245.00,627) rotate(-45)" text-anchor="end" font-size="12.6" textLength="126" lengthAdjust="spacingAndGlyphs" fill="#000">2023-11-02 00:00:00</text>
<text x="860.5" y="254.8" text-anchor="middle" font-size="16.6" textLength="215" lengthAdjust="spacingAndGlyphs" fill="#000">Count and Uniques Over Time</text>
<text transform="translate(427.4,438) rotate(-90)" text-anchor="middle" font-size="12.6" fill="#000">Value</text>
<text x="860.1" y="731.8" text-anchor="middle" font-size="12.6" fill="#000">Date</text>
<rect x="1157.5" y="268.3" width="91" height="38.8" rx="2" fill="#fff" fill-opacity="0.8" stroke="#d9d9d9" stroke-width="1"/>
<line x1="1160" y1="278" x2="1186" y2="278" stroke="#ff0000" stroke-width="1.8"/>
<circle cx="1173.3" cy="278" r="4.1" fill="#ff0000"/>
<text x="1195.3" y="282" font-size="12.6" fill="#000">Uniques</text>
<rect x="1161" y="292" width="24" height="8.3" fill="#6666ff"/>
<text x="1195.7" y="300.3" font-size="12.6" fill="#000">Count</text>
</svg>
</body></html>
